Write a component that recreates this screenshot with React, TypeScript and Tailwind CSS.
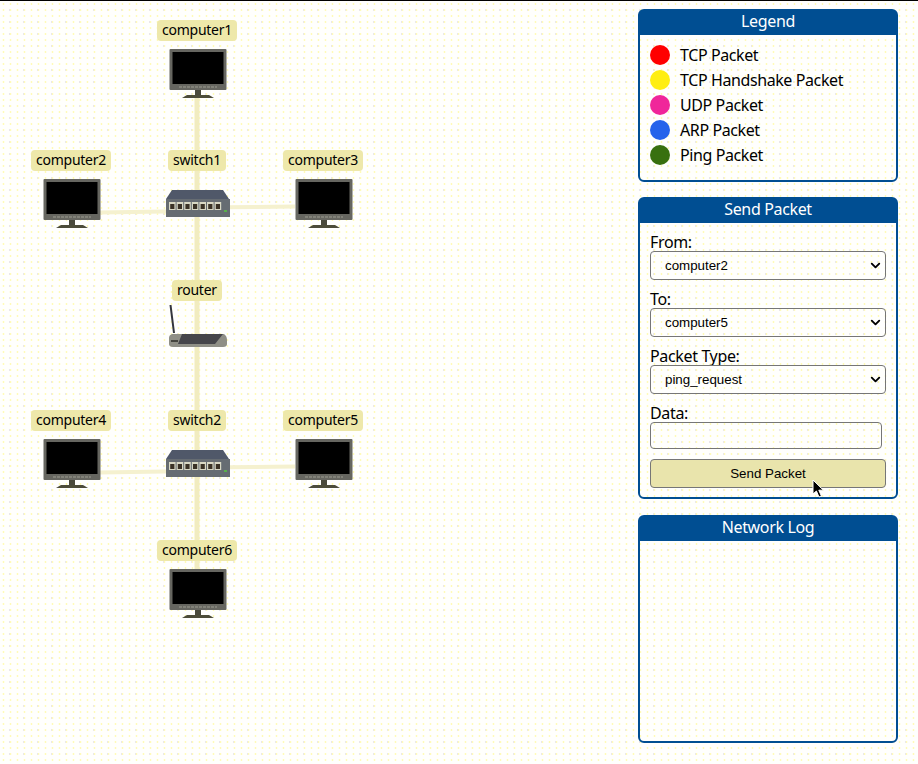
import { ChevronDown } from "lucide-react";

const legend = [
  { name: "TCP Packet", color: "bg-[#ff0000]" },
  { name: "TCP Handshake Packet", color: "bg-[#ffee11]" },
  { name: "UDP Packet", color: "bg-[#f0269a]" },
  { name: "ARP Packet", color: "bg-[#2563eb]" },
  { name: "Ping Packet", color: "bg-[#38700f]" },
];

const nodes = [
  { name: "computer1", kind: "computer", label: "left-[157px] top-[19px]", icon: "left-[169px] top-[47px]" },
  { name: "computer2", kind: "computer", label: "left-[31px] top-[149px]", icon: "left-[43px] top-[177px]" },
  { name: "switch1", kind: "switch", label: "left-[168px] top-[149px]", icon: "left-[166px] top-[188px]" },
  { name: "computer3", kind: "computer", label: "left-[283px] top-[149px]", icon: "left-[295px] top-[177px]" },
  { name: "router", kind: "router", label: "left-[172px] top-[279px]", icon: "left-[168px] top-[303px]" },
  { name: "computer4", kind: "computer", label: "left-[31px] top-[409px]", icon: "left-[43px] top-[437px]" },
  { name: "switch2", kind: "switch", label: "left-[168px] top-[409px]", icon: "left-[166px] top-[448px]" },
  { name: "computer5", kind: "computer", label: "left-[283px] top-[409px]", icon: "left-[295px] top-[437px]" },
  { name: "computer6", kind: "computer", label: "left-[157px] top-[539px]", icon: "left-[169px] top-[567px]" },
];

function ComputerIcon() {
  return (
    <svg width="58" height="51" viewBox="0 0 58 51">
      <rect x="0.5" y="1" width="57" height="41" rx="1" fill="#666660" />
      <rect x="3.5" y="4" width="51" height="32" fill="#000" />
      <path d="M10 39h38" stroke="#8b8b80" strokeWidth="1.5" strokeDasharray="3 1" />
      <rect x="26" y="42" width="6" height="5" fill="#4a4a3c" />
      <path d="M13 50 L18 47 H40 L45 50 Z" fill="#4d4d3a" />
    </svg>
  );
}

function SwitchIcon() {
  return (
    <svg width="64" height="29" viewBox="0 0 64 29">
      <path d="M6 1 H57 L63 10 H0 Z" fill="#505869" />
      <rect x="0" y="10" width="64" height="18" fill="#666c72" />
      {[0, 1, 2, 3, 4, 5, 6].map((i) => (
        <g key={i}>
          <rect x={3 + i * 7.6} y="13" width="6.6" height="8" fill="#d8d8c4" />
          <rect x={4.2 + i * 7.6} y="15" width="4.2" height="5" fill="#3a3226" />
        </g>
      ))}
      <rect x="58" y="21" width="3" height="2" fill="#59b04a" />
    </svg>
  );
}

function RouterIcon() {
  return (
    <svg width="60" height="44" viewBox="0 0 60 44">
      <path d="M2.5 1 L6 29" stroke="#34363c" strokeWidth="2" />
      <path d="M4 30 H56 Q59 32 59 36 V40 Q59 43 55 43 H5 Q1 43 1 40 V34 Q1 31 4 30 Z" fill="#8f8f86" />
      <path d="M14 30 H55 L47 40 H10 Z" fill="#45454a" />
      <rect x="3" y="36" width="7" height="2" fill="#45453f" />
    </svg>
  );
}

function Panel({ title, className, children }: { title: string; className: string; children?: React.ReactNode }) {
  return (
    <section className={`rounded-md border-2 border-[#004e92] ${className}`}>
      <h2 className="h-[24px] bg-[#004e92] text-center text-[16px] leading-[20px] tracking-[-0.35px] text-white">
        {title}
      </h2>
      {children}
    </section>
  );
}

function SelectField({ label, value, className }: { label: string; value: string; className?: string }) {
  return (
    <div className={className}>
      <label className="block h-[21px] pt-px text-[16px] leading-[22px] tracking-[-0.35px] text-black">{label}</label>
      <div className="relative h-[29px] w-[236px]">
        <select
          defaultValue={value}
          className="h-full w-full appearance-none rounded-[4px] border border-[#767676] bg-transparent pl-[14px] font-['Liberation_Sans',sans-serif] text-[13.33px] text-black"
        >
          <option>{value}</option>
        </select>
        <ChevronDown
          className="pointer-events-none absolute right-[3px] top-[7px] h-[15px] w-[15px] text-black"
          strokeWidth={3}
        />
      </div>
    </div>
  );
}

export default function App() {
  return (
    <div className="relative flex h-[764px] w-[918px] justify-end overflow-hidden border-t border-black bg-[#fffffd] bg-[radial-gradient(#fffbb8_1px,transparent_1.2px),radial-gradient(#e4e0f8_0.8px,transparent_1px)] bg-[length:7px_6px,14px_12px] bg-[position:0_0,3px_3px] pr-[20px] pt-[8px] font-['Noto_Sans',sans-serif]">
      {/* network links */}
      <svg className="absolute left-0 top-0" width="640" height="764">
        <g stroke="#f1ecc0" strokeWidth="5">
          <path d="M197 95 V570" />
        </g>
        <g stroke="#f5f1cf" strokeWidth="4">
          <path d="M100 211.5 L197 210" />
          <path d="M197 206.5 L295 205.5" />
          <path d="M100 471.5 L197 470" />
          <path d="M197 466.5 L295 465.5" />
        </g>
      </svg>

      {nodes.map((n) => (
        <div key={n.name}>
          <span
            className={`absolute ${n.label} h-[21px] rounded-[4px] bg-[#eee8aa] px-[5px] text-[14px] leading-[20px] tracking-[-0.25px] text-black`}
          >
            {n.name}
          </span>
          <div className={`absolute ${n.icon}`}>
            {n.kind === "computer" && <ComputerIcon />}
            {n.kind === "switch" && <SwitchIcon />}
            {n.kind === "router" && <RouterIcon />}
          </div>
        </div>
      ))}

      <div className="flex w-[260px] flex-col">
        <Panel title="Legend" className="h-[173px]">
          <ul className="flex flex-col pl-[10px] pt-[7px]">
            {legend.map((item) => (
              <li
                key={item.name}
                className="flex h-[25px] items-center gap-[10px] text-[16px] tracking-[-0.4px] text-black"
              >
                <span className={`h-[20px] w-[20px] rounded-full ${item.color}`} />
                {item.name}
              </li>
            ))}
          </ul>
        </Panel>

        <Panel title="Send Packet" className="mt-[15px] h-[302px]">
          <div className="px-[10px] pt-[7px]">
            <SelectField label="From:" value="computer2" />
            <SelectField label="To:" value="computer5" className="mt-[7px]" />
            <SelectField label="Packet Type:" value="ping_request" className="mt-[7px]" />
            <label className="mt-[7px] block h-[21px] pt-px text-[16px] leading-[22px] tracking-[-0.35px] text-black">
              Data:
            </label>
            <input className="block h-[27px] w-[232px] rounded-[4px] border border-[#767676] bg-transparent" />
            <button className="mt-[10px] block h-[29px] w-[236px] rounded-[4px] border border-[#767676] bg-[#e9e4ac] font-['Liberation_Sans',sans-serif] text-[13.33px] text-black">
              Send Packet
            </button>
          </div>
        </Panel>

        <Panel title="Network Log" className="mt-[16px] h-[228px]" />
      </div>

      {/* mouse pointer */}
      <svg className="absolute left-[811px] top-[478px]" width="14" height="20" viewBox="0 0 14 20">
        <path d="M2 1 V15 L5.4 12 L8 18 L10.4 17 L7.8 11.2 H12.4 Z" fill="#000" stroke="#fff" strokeWidth="1" />
      </svg>
    </div>
  );
}
